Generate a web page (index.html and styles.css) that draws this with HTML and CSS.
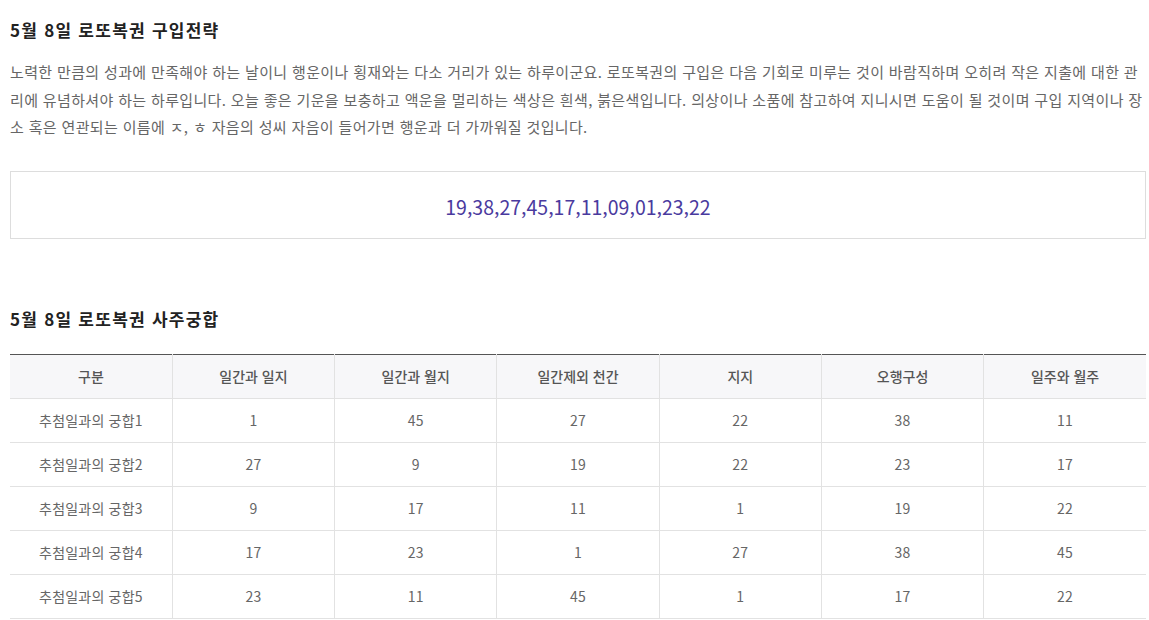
FILE: index.html
```html
<!DOCTYPE html>
<html lang="ko">
<head>
<meta charset="utf-8">
<link rel="stylesheet" href="styles.css">
</head>
<body>
<div class="page">
  <h2 class="title">5월 8일 로또복권 구입전략</h2>
  <p class="desc">노력한 만큼의 성과에 만족해야 하는 날이니 행운이나 횡재와는 다소 거리가 있는 하루이군요. 로또복권의 구입은 다음 기회로 미루는 것이 바람직하며 오히려 작은 지출에 대한 관리에 유념하셔야 하는 하루입니다. 오늘 좋은 기운을 보충하고 액운을 멀리하는 색상은 흰색, 붉은색입니다. 의상이나 소품에 참고하여 지니시면 도움이 될 것이며 구입 지역이나 장소 혹은 연관되는 이름에 ㅈ, ㅎ 자음의 성씨 자음이 들어가면 행운과 더 가까워질 것입니다.</p>
  <div class="numbers">19,38,27,45,17,11,09,01,23,22</div>
  <h2 class="title title2">5월 8일 로또복권 사주궁합</h2>
  <table class="saju">
    <thead>
      <tr><th>구분</th><th>일간과 일지</th><th>일간과 월지</th><th>일간제외 천간</th><th>지지</th><th>오행구성</th><th>일주와 월주</th></tr>
    </thead>
    <tbody>
      <tr><td>추첨일과의 궁합1</td><td>1</td><td>45</td><td>27</td><td>22</td><td>38</td><td>11</td></tr>
      <tr><td>추첨일과의 궁합2</td><td>27</td><td>9</td><td>19</td><td>22</td><td>23</td><td>17</td></tr>
      <tr><td>추첨일과의 궁합3</td><td>9</td><td>17</td><td>11</td><td>1</td><td>19</td><td>22</td></tr>
      <tr><td>추첨일과의 궁합4</td><td>17</td><td>23</td><td>1</td><td>27</td><td>38</td><td>45</td></tr>
      <tr><td>추첨일과의 궁합5</td><td>23</td><td>11</td><td>45</td><td>1</td><td>17</td><td>22</td></tr>
    </tbody>
  </table>
</div>
</body>
</html>
```

FILE: styles.css
```css
html, body {
  margin: 0;
  padding: 0;
  background: #fff;
}
body {
  font-family: "Noto Sans CJK KR", "Noto Sans", sans-serif;
  color: #666;
}
.page {
  width: 1136px;
  margin-left: 10px;
  padding-top: 18px;
}
.title {
  margin: 0;
  font-size: 17px;
  line-height: 24px;
  font-weight: 700;
  color: #222;
  letter-spacing: 1.25px;
}
.desc {
  margin: 16px 0 0;
  font-size: 15px;
  line-height: 27.5px;
  color: #666;
  letter-spacing: 0.35px;
}
.numbers {
  margin-top: 30px;
  border: 1px solid #ddd;
  display: flex;
  align-items: center;
  justify-content: center;
  font-size: 19.5px;
  color: #4a3a9e;
  padding-top: 4px;
  box-sizing: border-box;
  height: 68px;
}
.title2 {
  margin-top: 68px;
}
.saju {
  margin-top: 23px;
  width: 100%;
  border-collapse: collapse;
  table-layout: fixed;
  border-top: 1px solid #555;
  font-size: 14px;
}
.saju th, .saju td {
  height: 43px;
  padding: 0;
  text-align: center;
  border-left: 1px solid #e2e2e2;
  border-bottom: 1px solid #e2e2e2;
}
.saju th:first-child, .saju td:first-child {
  border-left: none;
}
.saju th {
  background: #f7f7f9;
  font-weight: 500;
  color: #555;
}
.saju td {
  color: #666;
  letter-spacing: 0.2px;
}
```
